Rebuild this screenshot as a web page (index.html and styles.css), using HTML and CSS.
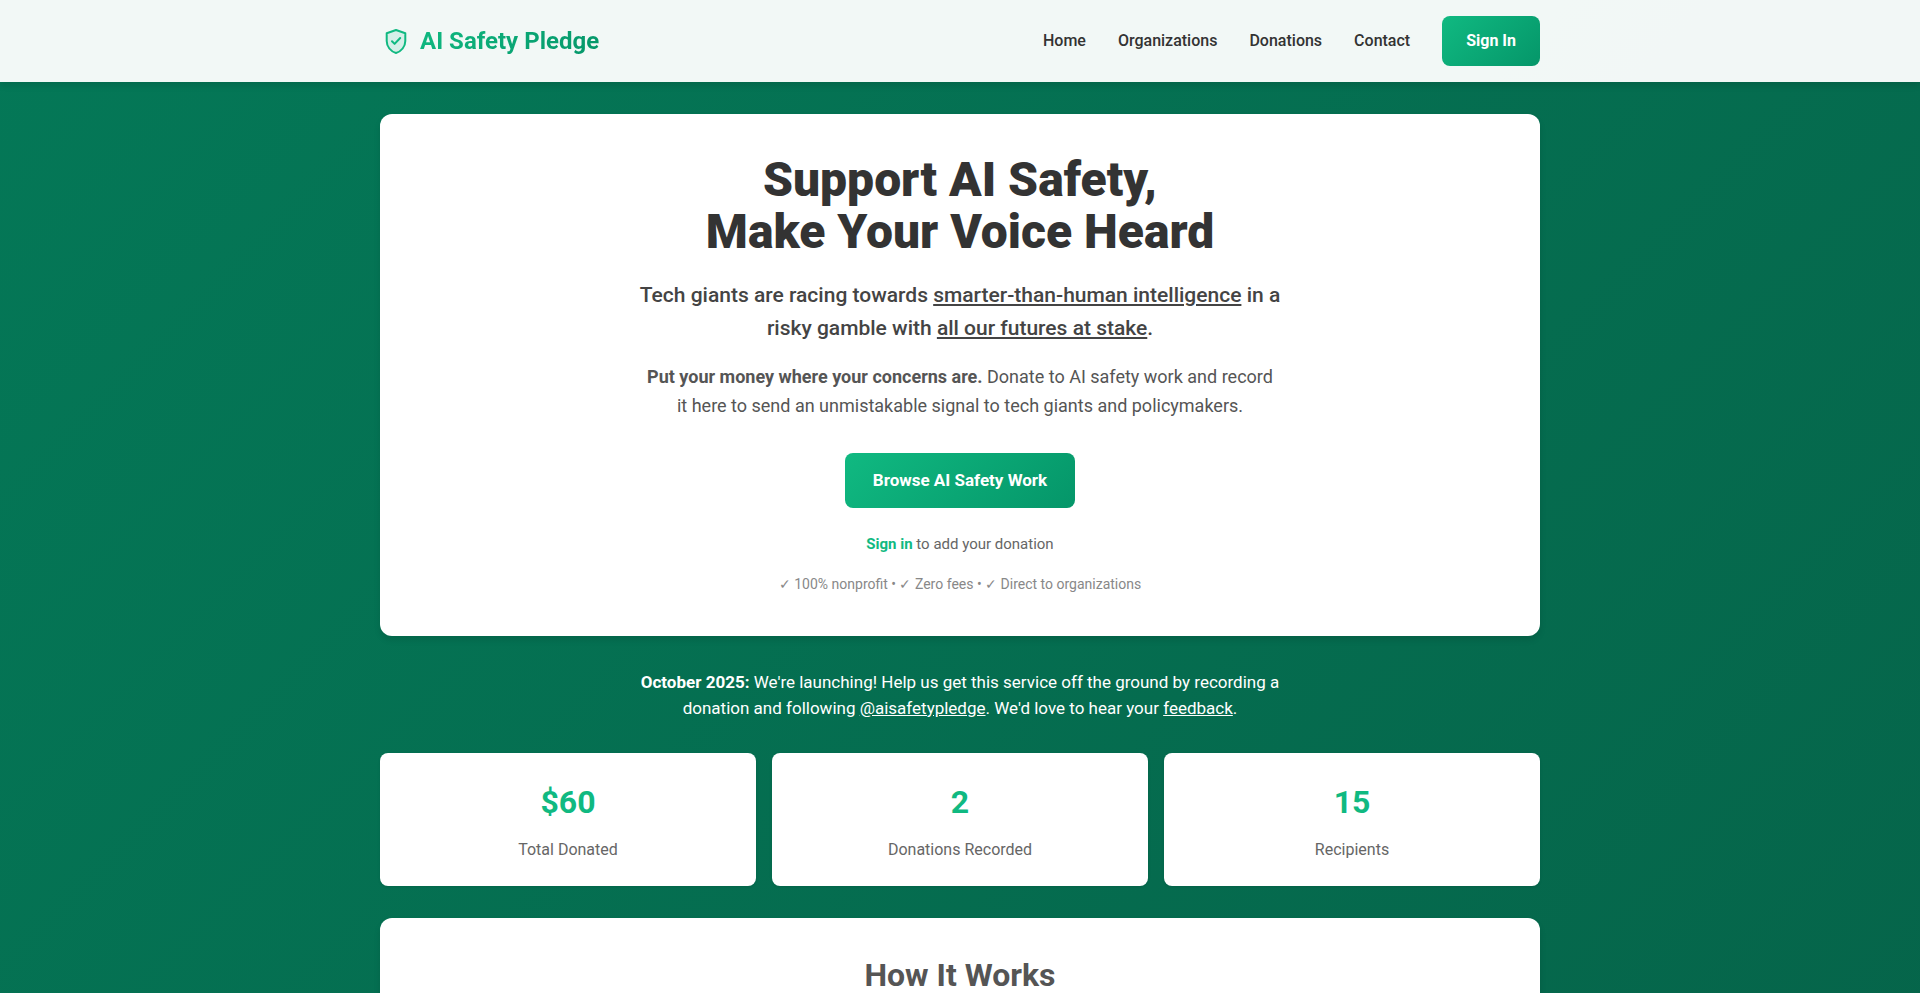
FILE: index.html
```html
<!DOCTYPE html>
<html lang="en">
<head>
    <meta charset="UTF-8">
    <meta name="viewport" content="width=device-width, initial-scale=1.0">
    <title>AI Safety Pledge</title>
    <link rel="stylesheet" href="styles.css">
</head>
<body>

    <header class="site-header">
        <div class="container header-inner">
            <a href="#" class="logo">
                <svg class="logo-icon" viewBox="0 0 32 32" fill="none" aria-hidden="true">
                    <path d="M16 5L25.3 8.2V16C25.3 21.6 21.4 26.4 16 28C10.6 26.4 6.7 21.6 6.7 16V8.2L16 5Z" fill="#10b981" fill-opacity="0.12" stroke="#10b981" stroke-width="2" stroke-linejoin="round"/>
                    <path d="M12 16.3L14.6 18.9L20.2 13" stroke="#10b981" stroke-width="2" stroke-linecap="round" stroke-linejoin="round"/>
                </svg>
                <span class="logo-text">AI Safety Pledge</span>
            </a>
            <nav class="nav">
                <a href="#">Home</a>
                <a href="#">Organizations</a>
                <a href="#">Donations</a>
                <a href="#">Contact</a>
                <button type="button" class="btn btn-small">Sign In</button>
            </nav>
        </div>
    </header>

    <main class="container">
        <section class="card hero">
            <h1>Support AI Safety,<br>Make Your Voice Heard</h1>
            <p class="hero-lead">Tech giants are racing towards <a href="#">smarter-than-human intelligence</a> in a risky gamble with <a href="#">all our futures at stake</a>.</p>
            <p class="hero-text"><strong>Put your money where your concerns are.</strong> Donate to AI safety work and record it here to send an unmistakable signal to tech giants and policymakers.</p>
            <a href="#" class="btn btn-large">Browse AI Safety Work</a>
            <p class="hero-signin"><a href="#">Sign in</a> to add your donation</p>
            <p class="hero-trust">✓ 100% nonprofit • ✓ Zero fees • ✓ Direct to organizations</p>
        </section>

        <p class="announcement"><strong>October 2025:</strong> We're launching! Help us get this service off the ground by recording a donation and following <a href="#">@aisafetypledge</a>. We'd love to hear your <a href="#">feedback</a>.</p>

        <section class="stats">
            <div class="stat">
                <div class="stat-number">$60</div>
                <div class="stat-label">Total Donated</div>
            </div>
            <div class="stat">
                <div class="stat-number">2</div>
                <div class="stat-label">Donations Recorded</div>
            </div>
            <div class="stat">
                <div class="stat-number">15</div>
                <div class="stat-label">Recipients</div>
            </div>
        </section>

        <section class="card how-it-works">
            <h2>How It Works</h2>
        </section>
    </main>

</body>
</html>
```

FILE: styles.css
```css
* {
    box-sizing: border-box;
    margin: 0;
    padding: 0;
}

body {
    font-family: Roboto, "Liberation Sans", sans-serif;
    font-size: 16px;
    line-height: 26px;
    color: #333;
    min-height: 200vh;
    background: linear-gradient(135deg, #047857 0%, #065f46 100%);
}

.container {
    max-width: 1200px;
    margin: 0 auto;
    padding: 0 20px;
}

/* header */
.site-header {
    position: sticky;
    top: 0;
    z-index: 10;
    padding: 16px 0;
    background: rgba(255, 255, 255, 0.95);
    box-shadow: 0 4px 6px rgba(0, 0, 0, 0.1);
}

.header-inner {
    display: flex;
    justify-content: space-between;
    align-items: center;
}

.logo {
    display: flex;
    align-items: center;
    gap: 8px;
    text-decoration: none;
}

.logo-icon {
    width: 32px;
    height: 32px;
}

.logo-text {
    font-size: 24px;
    font-weight: 700;
    background: linear-gradient(135deg, #10b981, #059669);
    -webkit-background-clip: text;
    background-clip: text;
    color: transparent;
}

.nav {
    display: flex;
    align-items: center;
    gap: 32px;
}

.nav a {
    color: #333;
    font-weight: 500;
    text-decoration: none;
}

.btn {
    display: inline-block;
    border: none;
    border-radius: 8px;
    background: linear-gradient(135deg, #10b981, #059669);
    color: #fff;
    font-family: inherit;
    font-weight: 700;
    line-height: 26px;
    text-decoration: none;
    cursor: pointer;
}

.btn-small {
    padding: 12px 24px;
    font-size: 16px;
}

.btn-large {
    padding: 14px 28px 15px;
    font-size: 17px;
}

/* cards */
.card {
    background: #fff;
    border-radius: 12px;
    padding: 40px;
    text-align: center;
    box-shadow: 0 4px 6px rgba(0, 0, 0, 0.1);
}

.hero {
    margin-top: 32px;
}

.hero h1 {
    font-size: 48px;
    font-weight: 900;
    line-height: 52px;
    margin-bottom: 21px;
}

.hero-lead {
    max-width: 650px;
    margin: 0 auto 17px;
    font-size: 21px;
    font-weight: 500;
    line-height: 33px;
    color: #444;
}

.hero-lead a {
    color: inherit;
}

.hero-text {
    max-width: 630px;
    margin: 0 auto 33px;
    font-size: 18px;
    line-height: 29px;
    color: #555;
}

.hero-signin {
    margin-top: 24px;
    font-size: 15px;
    line-height: 24px;
    color: #666;
}

.hero-signin a {
    color: #10b981;
    font-weight: 700;
    text-decoration: none;
}

.hero-trust {
    margin-top: 16px;
    font-size: 14px;
    line-height: 24px;
    color: #888;
}

.announcement {
    max-width: 650px;
    margin: 33px auto 32px;
    font-size: 17px;
    text-align: center;
    color: #fff;
}

.announcement a {
    color: inherit;
}

/* stats */
.stats {
    display: grid;
    grid-template-columns: repeat(3, 1fr);
    gap: 16px;
    margin-bottom: 32px;
}

.stat {
    background: #fff;
    border-radius: 8px;
    padding: 24px 24px 23px;
    text-align: center;
    box-shadow: 0 1px 3px rgba(0, 0, 0, 0.1);
}

.stat-number {
    font-size: 32px;
    font-weight: 700;
    line-height: 51px;
    margin-bottom: 9px;
    color: #10b981;
}

.stat-label {
    color: #666;
}

.how-it-works {
    min-height: 300px;
    padding-top: 32px;
}

.how-it-works h2 {
    font-size: 32px;
    font-weight: 700;
    line-height: 51px;
    color: #555;
}
```
